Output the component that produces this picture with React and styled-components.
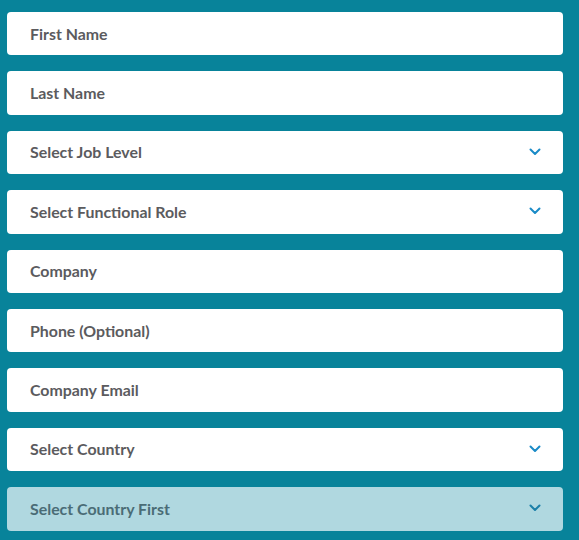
import React from 'react';
import styled, { createGlobalStyle } from 'styled-components';

const GlobalStyle = createGlobalStyle`
  html, body {
    margin: 0;
    padding: 0;
    background: #08839a;
  }
`;

const Form = styled.form`
  display: flex;
  flex-direction: column;
  gap: 16px;
  padding: 12px 16px 12px 7px;
  font-family: Lato, "Open Sans", sans-serif;
`;

const Field = styled.div`
  display: flex;
  align-items: center;
  height: 43.4px;
  box-sizing: border-box;
  padding: 0 22px 1px 23px;
  border-radius: 4px;
  background: ${p => (p.$disabled ? '#b0d8e0' : '#ffffff')};
  color: ${p => (p.$disabled ? '#4a6c76' : '#5b5b5e')};
  font-size: 15.9px;
  font-weight: 700;
`;

const Label = styled.span`
  flex: 1;
`;

const Chevron = styled.svg`
  width: 12px;
  height: 8px;
  color: ${p => (p.$disabled ? '#1a7fa8' : '#1a8bc7')};
`;

const fields = [
  { label: 'First Name' },
  { label: 'Last Name' },
  { label: 'Select Job Level', select: true },
  { label: 'Select Functional Role', select: true },
  { label: 'Company' },
  { label: 'Phone (Optional)' },
  { label: 'Company Email' },
  { label: 'Select Country', select: true },
  { label: 'Select Country First', select: true, disabled: true },
];

export default function App() {
  return (
    <>
      <GlobalStyle />
      <Form>
        {fields.map(f => (
          <Field key={f.label} $disabled={f.disabled}>
            <Label>{f.label}</Label>
            {f.select && (
              <Chevron $disabled={f.disabled} viewBox="0 0 12 8">
                <path d="M1.5 1.5 L6 6 L10.5 1.5" fill="none" stroke="currentColor" strokeWidth="2" strokeLinecap="round" strokeLinejoin="round" />
              </Chevron>
            )}
          </Field>
        ))}
      </Form>
    </>
  );
}
